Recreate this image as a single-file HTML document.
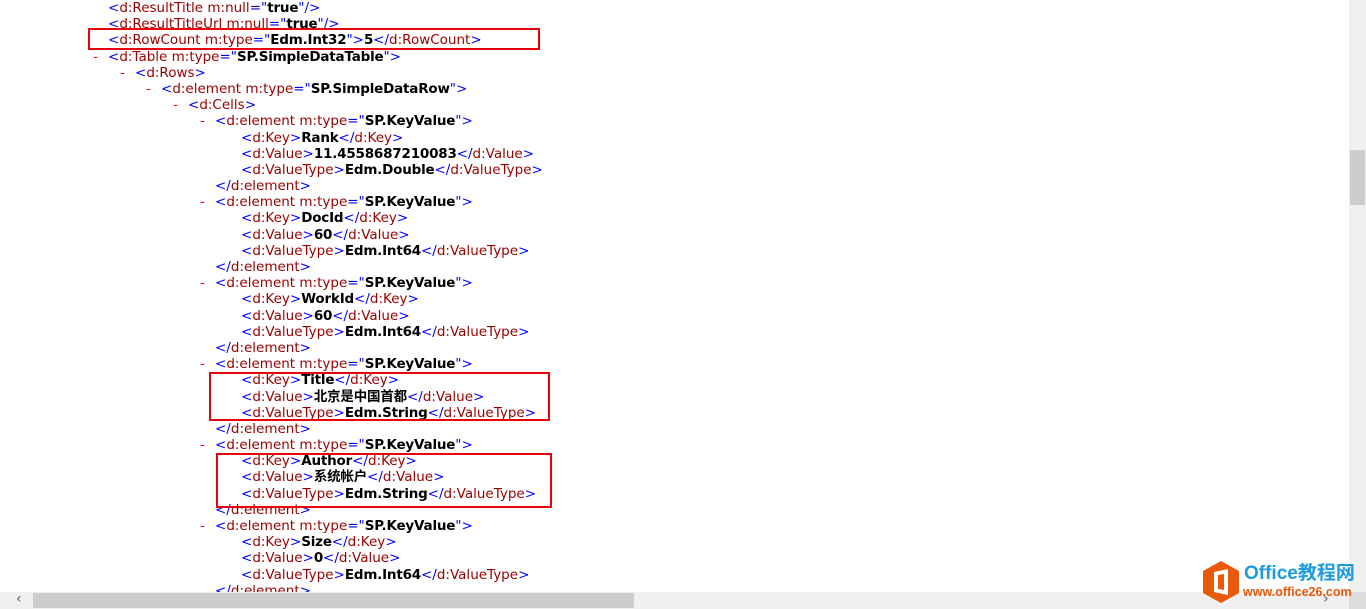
<!DOCTYPE html>
<html><head><meta charset="utf-8"><style>
html,body{margin:0;padding:0;background:#fff;width:1366px;height:609px;overflow:hidden;position:relative}
#c{position:absolute;top:0px;left:0;font-family:"DejaVu Sans","Liberation Sans","Noto Sans CJK SC",sans-serif;font-size:13.5px;line-height:16.2px}
#c div{position:relative;height:16.2px;white-space:pre}
.t{color:#0000ff}.n{color:#990000}.b{font-weight:bold;color:#000;letter-spacing:-0.2px}
.d{position:absolute;color:#ff0000;margin-left:-15px}
.l1{padding-left:108px}.l2{padding-left:135px}.l3{padding-left:161px}.l4{padding-left:188px}.l5{padding-left:215px}.l6{padding-left:241px}
.box{position:absolute;border:2px solid #e8000b;box-sizing:border-box}
.vs{position:absolute;right:0;top:0;width:17px;height:592px;background:#f0f0f0}
.vt{position:absolute;right:1px;top:150px;width:15px;height:55px;background:#cdcdcd}
.hs{position:absolute;left:0;bottom:0;width:1349px;height:17px;background:#f0f0f0}
.ht{position:absolute;left:33px;bottom:1px;width:601px;height:15px;background:#cdcdcd}
</style></head><body>
<div id="c"><div class="l1"><span class="t">&lt;</span><span class="n">d:ResultTitle m:null</span><span class="t">="</span><span class="b">true</span><span class="t">"/&gt;</span></div><div class="l1"><span class="t">&lt;</span><span class="n">d:ResultTitleUrl m:null</span><span class="t">="</span><span class="b">true</span><span class="t">"/&gt;</span></div><div class="l1"><span class="t">&lt;</span><span class="n">d:RowCount m:type</span><span class="t">="</span><span class="b">Edm.Int32</span><span class="t">"&gt;</span><span class="b">5</span><span class="t">&lt;/</span><span class="n">d:RowCount</span><span class="t">&gt;</span></div><div class="l1"><span class="d">-</span><span class="t">&lt;</span><span class="n">d:Table m:type</span><span class="t">="</span><span class="b">SP.SimpleDataTable</span><span class="t">"&gt;</span></div><div class="l2"><span class="d">-</span><span class="t">&lt;</span><span class="n">d:Rows</span><span class="t">&gt;</span></div><div class="l3"><span class="d">-</span><span class="t">&lt;</span><span class="n">d:element m:type</span><span class="t">="</span><span class="b">SP.SimpleDataRow</span><span class="t">"&gt;</span></div><div class="l4"><span class="d">-</span><span class="t">&lt;</span><span class="n">d:Cells</span><span class="t">&gt;</span></div><div class="l5"><span class="d">-</span><span class="t">&lt;</span><span class="n">d:element m:type</span><span class="t">="</span><span class="b">SP.KeyValue</span><span class="t">"&gt;</span></div><div class="l6"><span class="t">&lt;</span><span class="n">d:Key</span><span class="t">&gt;</span><span class="b">Rank</span><span class="t">&lt;/</span><span class="n">d:Key</span><span class="t">&gt;</span></div><div class="l6"><span class="t">&lt;</span><span class="n">d:Value</span><span class="t">&gt;</span><span class="b">11.4558687210083</span><span class="t">&lt;/</span><span class="n">d:Value</span><span class="t">&gt;</span></div><div class="l6"><span class="t">&lt;</span><span class="n">d:ValueType</span><span class="t">&gt;</span><span class="b">Edm.Double</span><span class="t">&lt;/</span><span class="n">d:ValueType</span><span class="t">&gt;</span></div><div class="l5"><span class="t">&lt;/</span><span class="n">d:element</span><span class="t">&gt;</span></div><div class="l5"><span class="d">-</span><span class="t">&lt;</span><span class="n">d:element m:type</span><span class="t">="</span><span class="b">SP.KeyValue</span><span class="t">"&gt;</span></div><div class="l6"><span class="t">&lt;</span><span class="n">d:Key</span><span class="t">&gt;</span><span class="b">DocId</span><span class="t">&lt;/</span><span class="n">d:Key</span><span class="t">&gt;</span></div><div class="l6"><span class="t">&lt;</span><span class="n">d:Value</span><span class="t">&gt;</span><span class="b">60</span><span class="t">&lt;/</span><span class="n">d:Value</span><span class="t">&gt;</span></div><div class="l6"><span class="t">&lt;</span><span class="n">d:ValueType</span><span class="t">&gt;</span><span class="b">Edm.Int64</span><span class="t">&lt;/</span><span class="n">d:ValueType</span><span class="t">&gt;</span></div><div class="l5"><span class="t">&lt;/</span><span class="n">d:element</span><span class="t">&gt;</span></div><div class="l5"><span class="d">-</span><span class="t">&lt;</span><span class="n">d:element m:type</span><span class="t">="</span><span class="b">SP.KeyValue</span><span class="t">"&gt;</span></div><div class="l6"><span class="t">&lt;</span><span class="n">d:Key</span><span class="t">&gt;</span><span class="b">WorkId</span><span class="t">&lt;/</span><span class="n">d:Key</span><span class="t">&gt;</span></div><div class="l6"><span class="t">&lt;</span><span class="n">d:Value</span><span class="t">&gt;</span><span class="b">60</span><span class="t">&lt;/</span><span class="n">d:Value</span><span class="t">&gt;</span></div><div class="l6"><span class="t">&lt;</span><span class="n">d:ValueType</span><span class="t">&gt;</span><span class="b">Edm.Int64</span><span class="t">&lt;/</span><span class="n">d:ValueType</span><span class="t">&gt;</span></div><div class="l5"><span class="t">&lt;/</span><span class="n">d:element</span><span class="t">&gt;</span></div><div class="l5"><span class="d">-</span><span class="t">&lt;</span><span class="n">d:element m:type</span><span class="t">="</span><span class="b">SP.KeyValue</span><span class="t">"&gt;</span></div><div class="l6"><span class="t">&lt;</span><span class="n">d:Key</span><span class="t">&gt;</span><span class="b">Title</span><span class="t">&lt;/</span><span class="n">d:Key</span><span class="t">&gt;</span></div><div class="l6"><span class="t">&lt;</span><span class="n">d:Value</span><span class="t">&gt;</span><span class="b">北京是中国首都</span><span class="t">&lt;/</span><span class="n">d:Value</span><span class="t">&gt;</span></div><div class="l6"><span class="t">&lt;</span><span class="n">d:ValueType</span><span class="t">&gt;</span><span class="b">Edm.String</span><span class="t">&lt;/</span><span class="n">d:ValueType</span><span class="t">&gt;</span></div><div class="l5"><span class="t">&lt;/</span><span class="n">d:element</span><span class="t">&gt;</span></div><div class="l5"><span class="d">-</span><span class="t">&lt;</span><span class="n">d:element m:type</span><span class="t">="</span><span class="b">SP.KeyValue</span><span class="t">"&gt;</span></div><div class="l6"><span class="t">&lt;</span><span class="n">d:Key</span><span class="t">&gt;</span><span class="b">Author</span><span class="t">&lt;/</span><span class="n">d:Key</span><span class="t">&gt;</span></div><div class="l6"><span class="t">&lt;</span><span class="n">d:Value</span><span class="t">&gt;</span><span class="b">系统帐户</span><span class="t">&lt;/</span><span class="n">d:Value</span><span class="t">&gt;</span></div><div class="l6"><span class="t">&lt;</span><span class="n">d:ValueType</span><span class="t">&gt;</span><span class="b">Edm.String</span><span class="t">&lt;/</span><span class="n">d:ValueType</span><span class="t">&gt;</span></div><div class="l5"><span class="t">&lt;/</span><span class="n">d:element</span><span class="t">&gt;</span></div><div class="l5"><span class="d">-</span><span class="t">&lt;</span><span class="n">d:element m:type</span><span class="t">="</span><span class="b">SP.KeyValue</span><span class="t">"&gt;</span></div><div class="l6"><span class="t">&lt;</span><span class="n">d:Key</span><span class="t">&gt;</span><span class="b">Size</span><span class="t">&lt;/</span><span class="n">d:Key</span><span class="t">&gt;</span></div><div class="l6"><span class="t">&lt;</span><span class="n">d:Value</span><span class="t">&gt;</span><span class="b">0</span><span class="t">&lt;/</span><span class="n">d:Value</span><span class="t">&gt;</span></div><div class="l6"><span class="t">&lt;</span><span class="n">d:ValueType</span><span class="t">&gt;</span><span class="b">Edm.Int64</span><span class="t">&lt;/</span><span class="n">d:ValueType</span><span class="t">&gt;</span></div><div class="l5"><span class="t">&lt;/</span><span class="n">d:element</span><span class="t">&gt;</span></div></div>

<div class="box" style="left:88px;top:28px;width:452px;height:22px"></div>
<div class="box" style="left:209px;top:372px;width:341px;height:49px"></div>
<div class="box" style="left:216px;top:453px;width:336px;height:55px"></div>

<div class="vs"></div><div class="vt"></div>
<div class="hs"></div><div class="ht"></div>
<div style="position:absolute;left:16px;top:591px;font:14px 'DejaVu Sans';color:#606060">‹</div>
<div style="position:absolute;left:1323px;top:591px;font:14px 'DejaVu Sans';color:#606060">›</div>
<div style="position:absolute;right:0;bottom:0;width:17px;height:17px;background:#dcdcdc"></div>

<svg style="position:absolute;left:1201px;top:560px" width="40" height="44" viewBox="0 0 40 44">
<polygon points="20,1 38,11 38,33 20,43 2,33 2,11" fill="#e8590c"/>
<path d="M13,12 L27,9 L27,35 L13,32 Z" fill="#fff"/>
<path d="M17,15 L23,14 L23,30 L17,29 Z" fill="#e8590c"/>
</svg>
<div style="position:absolute;left:1244px;top:563px;white-space:nowrap;font:bold 19px 'Liberation Sans','Noto Sans CJK SC',sans-serif;color:#1e9be0;line-height:22px">Office教程网</div>
<div style="position:absolute;left:1243px;top:585px;white-space:nowrap;font:bold 12.5px 'Liberation Sans',sans-serif;color:#e8590c;line-height:14px">www.office26.com</div>
</body></html>
